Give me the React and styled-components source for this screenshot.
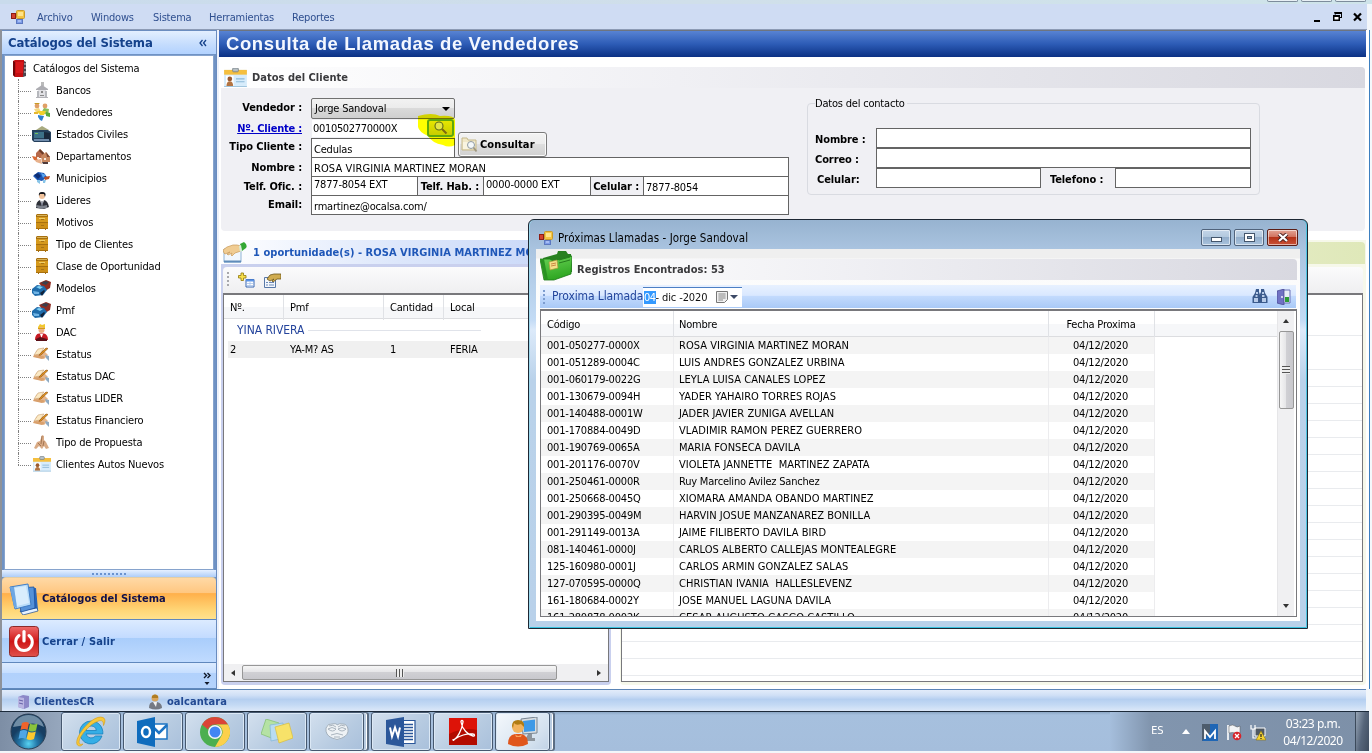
import React from 'react';
import styled, { createGlobalStyle, css } from 'styled-components';

const ui = '"DejaVu Sans Condensed", "DejaVu Sans", "Noto Sans", sans-serif';

const Global = createGlobalStyle`
  * { box-sizing: border-box; }
  body { margin: 0; overflow: hidden; font: 11px/13px ${ui}; color: #000; letter-spacing: -0.2px; }
  svg { display: block; flex: none; }
`;

/* ---------- frame ---------- */
const Screen = styled.div`
  position: relative; width: 1372px; height: 753px; overflow: hidden;
  display: grid; grid-template-rows: 4px 26px 659px 22px 40px 2px;
  background: #f2f6fa;
`;
const FrameTop = styled.div`
  display: flex; justify-content: flex-end; gap: 3px; padding-right: 6px;
  background: linear-gradient(90deg, #c9dbec, #d0dfea 50%, #cfe4ea);
`;
const CaptionStub = styled.i`
  width: 31px; height: 2px; border: 1px solid #7d8c9c; border-top: 0; border-radius: 0 0 4px 4px; background: #e8f0f5;
`;
const MenuBar = styled.nav`
  display: flex; align-items: center; padding: 1px 2px 0 10px; margin-right: 5px;
  background: #cfdcf3; border-bottom: 1px solid #8d9bb5; color: #2f4f8f;
`;
const MenuItem = styled.span`width: ${p => p.$w}px; padding-left: 1px; white-space: nowrap;`;
const Spacer = styled.div`flex: 1;`;
const Main = styled.main`
  display: flex; min-height: 0;
  background: linear-gradient(90deg, #fff 1369px, #3c7fc0 1369px, #3c7fc0 1370px, #f4f8fb 1370px);
`;

/* ---------- sidebar ---------- */
const Sidebar = styled.aside`
  width: 217px; flex: none; display: flex; flex-direction: column;
  border-left: 2px solid #8e9299; border-right: 1px solid #6a8cbf; background: #6f92c4;
`;
const SideHead = styled.header`
  height: 24px; padding: 0 9px 0 6px; display: flex; align-items: center; justify-content: space-between;
  background: linear-gradient(#e3efff, #c4dcfd 60%, #b2d2ff); border-top: 1px solid #6b8dc0;
  font: bold 13px/16px ${ui}; color: #15428b; letter-spacing: -0.1px;
`;
const Tree = styled.div`
  height: 515px; margin: 1px 2px 0 2px; padding: 1px 0 0 7px; background: #fff;
  border: 1px solid #86a3cd;
`;
const Root = styled.div`display: flex; align-items: center; height: 22px; gap: 7px;`;
const Branch = styled.div`
  position: relative; height: 22px; margin-left: 6px; display: flex; align-items: center; padding-left: 14px;
  white-space: nowrap; letter-spacing: -0.15px;
  &::before { content: ''; position: absolute; left: 0; top: 0; height: ${p => (p.$last ? '12px' : '22px')}; border-left: 1px dotted #808080; }
  &::after { content: ''; position: absolute; left: 0; top: 12px; width: 13px; border-top: 1px dotted #808080; }
`;
const BranchIcon = styled.span`width: 19px; height: 18px; margin-right: 5px; display: grid; place-items: center;`;
const Grip = styled.div`
  height: 7px; background: linear-gradient(#e6f0ff, #aecdf8); display: grid; place-items: center;
`;
const Dots = styled.i`
  flex: none; width: ${p => (p.$v ? '2px' : '35px')}; height: ${p => (p.$v ? p.$v + 'px' : '2px')};
  background: repeating-linear-gradient(${p => (p.$v ? '180deg' : '90deg')}, ${p => p.$c || '#6b93cf'} 0 2px, transparent 2px 4px);
`;
const NavButton = styled.div`
  height: 43px; display: flex; align-items: center; gap: 3px; padding-left: 7px;
  border-bottom: 1px solid #6088bd; font-weight: bold; color: #15428b; letter-spacing: 0.12px;
  background: linear-gradient(#dcebff, #c3dbff 42%, #a9cdfb 43%, #c0dbff);
  ${p => p.$hot && css`
    border-top: 1px solid #e3cda4; border-radius: 4px 4px 0 0; color: #10104a; letter-spacing: -0.03px;
    background: linear-gradient(#ffd9a6, #ffc781 36%, #ffb04b 38%, #ffd778 80%, #ffe28e);
  `}
`;
const NavFoot = styled.div`
  flex: 1; display: flex; flex-direction: column; align-items: flex-end; justify-content: flex-end; padding: 0 5px 2px;
  background: linear-gradient(#dcebff, #c6deff 40%, #b1d1fc 42%, #b5d3fc); border-bottom: 1px solid #6088bd;
`;

/* ---------- work area ---------- */
const Work = styled.section`flex: 1; min-width: 0; display: flex; flex-direction: column; padding: 0 6px 0 2px; background: linear-gradient(90deg, #eef2fb 2px, transparent 2px);`;
const PageTitle = styled.h1`
  margin: 0; height: 27px; padding-left: 7px; border-top: 1px solid #6d7480; color: #f4f8ff;
  background: linear-gradient(#5883d3, #2d5cb6 50%, #0b3184);
  font: bold 18.5px/25px "Liberation Sans", Arial, sans-serif; letter-spacing: 0.6px;
`;
const Panel = styled.div`
  height: 164px; margin: 10px 1px 0 2px; background: #f0f0f4; border-radius: 4px;
`;
const Strip = styled.header`
  height: 21px; display: flex; align-items: center; padding-left: ${p => p.$pad || 0}px; border-radius: 0 4px 0 0;
  background: linear-gradient(90deg, #fff, #f0f0f4 40%, #d8d8e0);
  font: bold 11px/14px ${ui}; color: #3a3a3d; letter-spacing: 0.02px;
`;
const PanelIcon = styled.span`width: 28px;`;
const PanelBody = styled.div`display: flex; justify-content: space-between; padding: 10px 105px 0 0;`;
const Form = styled.div`width: 568px; padding-left: 1px;`;
const FormTop = styled.div`display: flex; align-items: flex-start;`;
const FormRow = styled.div`display: flex; height: ${p => p.$h || 19}px;`;
const Label = styled.label`
  width: ${p => p.$w || 80}px; margin-right: ${p => (p.$m === undefined ? 9 : p.$m)}px; margin-left: ${p => p.$ml || 0}px; padding-left: ${p => p.$pl || 0}px;
  flex: none; text-align: ${p => p.$align || 'right'};
  font-weight: bold; line-height: ${p => p.$lh || 20}px; letter-spacing: -0.1px; white-space: nowrap;
  ${p => p.$link && css`color: #0000c8; text-decoration: underline; letter-spacing: -0.22px;`}
`;
const Field = styled.div`
  width: ${p => p.$w}px; height: ${p => p.$h || 20}px; flex: none; padding: 0 2px; background: #fff;
  border: 1px solid ${p => (p.$plain ? 'transparent' : '#646464')}; line-height: ${p => p.$lh || 21}px; white-space: nowrap;
  ${p => p.$plain && css`padding: 0 1px; background-clip: padding-box; letter-spacing: -0.32px;`}
  ${p => p.$caps && css`letter-spacing: 0.1px;`}
`;
const Combo = styled(Field)`
  display: flex; align-items: center; justify-content: space-between; padding: 0 0 0 3px; border-color: #707070; border-radius: 2px;
  background: linear-gradient(#f2f2f2, #ebebeb 48%, #dadada 50%, #cfcfcf);
`;
const SearchCell = styled.div`position: relative; width: 28px; height: 18px; margin-left: -28px;`;
const Highlight = styled.svg`position: absolute; left: -11px; top: -5px; mix-blend-mode: multiply;`;
const SearchButton = styled.button`
  position: absolute; inset: 0 1px 0 0; padding: 0; display: grid; place-items: center;
  border: 2px solid #5fa80c; border-radius: 3px; background: linear-gradient(#e6e600, #c9cd00);
`;
const Button = styled.button`
  width: 89px; height: 25px; margin: 34px 0 0 3px; padding: 0 0 0 2px; display: flex; align-items: center; gap: 2px;
  border: 1px solid #7a7a7a; border-radius: 3px; box-shadow: inset 0 0 0 1px #fafafa;
  background: linear-gradient(#f3f3f3, #ececec 48%, #dedede 50%, #d0d0d0);
  font: bold 11px/13px ${ui}; letter-spacing: 0.1px;
`;
const Contact = styled.fieldset`
  width: 453px; height: 98px; margin: -1px 0 0; padding: 18px 7px 0 7px; border: 1px solid #d9dbe1; border-radius: 4px;
  legend { padding: 0 2px 0 0; margin-left: 0; }
`;

/* ---------- lower area ---------- */
const Lower = styled.div`flex: 1; min-height: 0; display: flex; gap: 9px; margin: 9px 0 4px 2px;`;
const Pane = styled.div`
  width: ${p => (p.$w ? p.$w + 'px' : 'auto')}; flex: ${p => (p.$w ? 'none' : 1)}; display: flex; flex-direction: column;
  padding: 0 ${p => (p.$blue ? '2px 3px' : '3px 3px')} ${p => (p.$blue ? 2 : 1)}px; border-radius: 0 0 4px 4px; background: ${p => (p.$blue ? '#c9d0ee' : '#f6f8ea')};
`;
const PaneHead = styled.header`
  height: 24px; margin: 0 -2px; display: flex; align-items: center; gap: 6px; padding: 1px 0 0 2px; white-space: nowrap;
  font: bold 11px/14px ${ui}; color: #1f57b8; border-radius: 0 4px 0 0; letter-spacing: 0.05px;
  background: ${p => (p.$green ? 'linear-gradient(90deg, #fff, #dfe8b9)' : 'linear-gradient(90deg, #fff, #dde7fb 45%, #c2d3f7)')};
  ${p => p.$green && css`margin-top: 2px; height: 22px;`}
`;
const Tools = styled.div`
  height: 26px; margin-top: 3px; display: flex; align-items: center; gap: 9px; padding: 0 6px 0 4px;
  background: linear-gradient(#fbfbfc, #efeff1); border-radius: 4px 4px 0 0;
`;
const ListBox = styled.div`
  flex: 1; min-height: 0; display: flex; flex-direction: column; background: #fff; border: 1px solid #78787c; border-top-width: 2px;
  ${p => p.$lined && css`
    background:
      linear-gradient(#fff 39px, transparent 39px 42px, #fff 42px 60px, transparent 60px),
      repeating-linear-gradient(#fff 0 6px, #e9ebee 6px 7px, #fff 7px 17px);
  `}
`;
const DialogList = styled(ListBox)`margin-top: 1px;`;
const HeadRow = styled.div`
  display: grid; grid-template-columns: ${p => p.$cols}; height: ${p => p.$h || 24}px; flex: none; border-bottom: 1px solid #dcdde0;
  background: linear-gradient(#fff 50%, #f6f7f9 51%); line-height: ${p => (p.$h ? 27 : 25)}px;
`;
const HeadCell = styled.span`
  padding-left: 6px; border-right: 1px solid #e0e2e6;
  ${p => p.$tight && css`padding-left: 5px;`}
  ${p => p.$center && css`padding: 0 1px 0 0; text-align: center;`}
`;
const Group = styled.div`
  height: 22px; padding: 0 0 0 13px; display: flex; align-items: center; gap: 4px; color: #24449c; font-size: 12px; letter-spacing: -0.05px; white-space: nowrap;
  &::after { content: ''; width: 173px; border-top: 1px solid #e0e3ea; }
`;
const OppRow = styled.div`
  display: grid; grid-template-columns: 60px 100px 60px 1fr; height: 17px; margin-left: 4px; background: #f0f0f0; line-height: 17px;
  span { padding-left: 2px; }
`;
const HScroll = styled.div`height: 17px; margin-top: auto; display: flex; align-items: center; background: #f0f0f2;`;
const Arrow = styled.i`
  width: ${p => p.$w || 18}px; display: grid; place-items: center;
  &::before { content: ''; border: 3px solid transparent; border-width: ${p => (p.$big ? '4px' : '3px')};
    ${p => p.$dir === 'left' && 'border-right: 4px solid #333; border-left: 0;'}
    ${p => p.$dir === 'right' && 'border-left: 4px solid #333; border-right: 0;'}
    ${p => p.$dir === 'up' && 'border-bottom: 4px solid #333; border-top: 0;'}
    ${p => p.$dir === 'down' && `border-top: 4px solid ${p.$c || '#333'}; border-bottom: 0;`}
  }
`;
const Thumb = styled.div`
  display: grid; place-items: center; border: 1px solid #979797; border-radius: 2px; flex: none;
  ${p => (p.$v
    ? css`width: 15px; height: 78px; background: linear-gradient(90deg, #f6f6f6, #e6e6e8 45%, #d0d0d4 50%, #c8c8cd);`
    : css`width: 315px; height: 15px; background: linear-gradient(#f6f6f6, #e6e6e8 45%, #d0d0d4 50%, #c8c8cd);`)}
  &::after { content: ''; width: 8px; height: 8px; background: repeating-linear-gradient(${p => (p.$v ? '180deg' : '90deg')}, #555 0 1px, #eee 1px 3px); }
`;

/* ---------- dialog ---------- */
const Dialog = styled.section`
  position: absolute; left: 528px; top: 219px; width: 780px; height: 410px; padding: 0 7px 7px; display: flex; flex-direction: column;
  border: 1px solid #1d2733; border-radius: 6px 6px 0 0; background: linear-gradient(#97b3d0, #aac4e0 30px, #c3dbf5 100px, #dceafa 110px, #bad2ea 160px, #b9d1ea);
  box-shadow: inset 1px 0 #9cd8ee, inset -1px 0 #4fc5e2, inset 0 -1px #38c2df;
`;
const DialogTitle = styled.header`height: 29px; display: flex; align-items: center; gap: 3px; padding: 7px 2px 0 3px; font-size: 11.5px; letter-spacing: 0.08px;`;
const DialogName = styled.span`padding-left: 2px;`;
const Caption = styled.button`
  width: ${p => (p.$close ? 31 : 30)}px; height: 17px; padding: 0; display: grid; place-items: center; margin-top: -1px;
  border: 1px solid #50637c; border-radius: 2px; box-shadow: inset 0 0 0 1px #ffffff90;
  background: linear-gradient(#c3d5e8, #b2c8de 48%, #93aecb 50%, #a9c3dd);
  ${p => p.$close && css`border-color: #5b1d16; background: linear-gradient(#e3a595, #d0705c 48%, #b53318 50%, #c95238);`}
`;
const DialogBody = styled.div`flex: 1; min-height: 0; display: flex; flex-direction: column; padding: 10px 3px 4px 4px; background: linear-gradient(#efefef 9px, #fafafa 10px, #fff 80px);`;
const FolderMark = styled.span`width: 37px; height: 22px; display: flex; align-items: center; margin-top: -8px;`;
const FilterBar = styled.div`
  height: 23px; margin: 5px 1px 0 0; display: flex; align-items: center; padding-left: 3px; color: #24469c;
  background: linear-gradient(#e8f1ff, #d9e8ff 45%, #c2dafd 50%, #a9c9f7); font-size: 12px; letter-spacing: -0.11px; white-space: nowrap;
`;
const FilterLabel = styled.span`width: 98px; padding-left: 7px;`;
const FilterIcons = styled.span`display: flex; gap: 9px; padding-right: 5px;`;
const DatePick = styled.div`
  height: 20px; width: 99px; display: flex; align-items: center; color: #111; background: #fff; border-top: 1px solid #4d7fc4; padding: 0 2px 0 1px; font-size: 11px; letter-spacing: -0.12px;
  b { font-weight: normal; color: #fff; background: #3399ff; line-height: 13px; letter-spacing: -0.5px; }
`;
const ListSplit = styled.div`flex: 1; min-height: 0; display: flex;`;
const Rows = styled.div`flex: 1; min-width: 0; overflow: hidden;`;
const Row = styled.div`
  display: grid; grid-template-columns: 133px 375px 106px 1fr; height: 17px; line-height: 17px; white-space: pre;
  > span { padding-left: 6px; border-right: 1px solid #ececee; border-bottom: 1px solid #f1f1f3; background: ${p => (p.$alt ? '#f4f4f4' : '#fff')}; }
  > span:nth-child(2) { padding-left: 5px; letter-spacing: ${p => (p.$caps ? '0.02px' : '-0.2px')}; }
  > span:nth-child(3) { padding: 0 2px 0 0; text-align: center; }
  > span:last-child { background: #fff; border-right: 0; border-bottom-color: #e6e6e8; }
`;
const VScroll = styled.div`
  width: 17px; display: flex; flex-direction: column; align-items: center; background: #f0f0f2; margin-right: 2px; border-left: 1px solid #e6e6e8;
  > i { height: 20px; }
`;

/* ---------- status and taskbar ---------- */
const Status = styled.footer`
  display: flex; align-items: center; margin-right: 6px; padding: 2px 0 0 16px; border-top: 1px solid #5b84b5; border-left: 2px solid #8e9299;
  background: linear-gradient(#e2ecfa, #d0e0f6 25%, #b5cff0 45%, #c3d9f4 70%, #dce8f8);
  font: bold 11px/14px ${ui}; color: #234a93; letter-spacing: 0.05px;
`;
const StatusItem = styled.span`display: flex; align-items: center; gap: 5px; width: 131px;`;
const Taskbar = styled.footer`
  display: flex; align-items: stretch; margin-right: 3px; background: linear-gradient(#8ba6c4, #a6c0de 3px, #a5bedc); border-top: 1px solid #1c2a3a;
`;
const Start = styled.div`width: 61px; padding-right: 4px; background: linear-gradient(90deg, #7d8ea5, #96a7bd); display: grid; place-items: center;`;
const Task = styled.div`
  width: ${p => (p.$stack ? 55 : 60)}px; margin-right: ${p => (p.$stack ? 7 : 2)}px; display: grid; place-items: center;
  border: 1px solid #46586f; border-radius: 3px; box-shadow: inset 0 0 0 1px #dbe8f5;
  background: linear-gradient(135deg, #d3e0ee, #b7cbe1 60%, #a9c0db);
  ${p => p.$stack && css`box-shadow: inset 0 0 0 1px #dbe8f5, 3px 0 0 -1px #b9cce1, 4px 0 0 -1px #fff, 5px 0 0 0 #5b6d83;`}
  ${p => p.$active && css`background: linear-gradient(135deg, #f4f8fc, #d5e2ef 70%, #c0d2e6);`}
`;
const Tray = styled.div`
  width: 259px; margin-left: auto; display: flex; align-items: center; padding-left: 41px; color: #fff;
  background: linear-gradient(90deg, #a5bedc, #8195ae 40px, #7d90a8);
  font: 11.5px/17px "Noto Sans", sans-serif; letter-spacing: -0.1px;
`;
const Lang = styled.span`width: 31px; padding-bottom: 5px; font-size: 11.5px;`;
const TrayIcons = styled.span`display: flex; gap: 8px; align-items: center; margin-left: 12px; padding-top: 2px;`;
const Clock = styled.span`width: 62px; margin-left: 16px; text-align: center; white-space: nowrap; font-size: 12px; letter-spacing: -0.45px;`;
const ShowDesktop = styled.div`align-self: stretch; width: 14px; margin-left: auto; border-left: 1px solid #3c4a5b; background: linear-gradient(100deg, #97a5b6, #56657a 50%, #3f4c5e);`;

/* ---------- drawings ---------- */
const Svg = ({ w = 16, h = 16, vb, children, ...r }) => <svg width={w} height={h} viewBox={vb || `0 0 ${w} ${h}`} {...r}>{children}</svg>;

const FormsIcon = () => (
  <Svg w={14} h={14}>
    <rect x="5.5" y=".5" width="8" height="8" rx="1" fill="#f4c542" stroke="#c99a2a" />
    <rect x="7" y="2" width="5" height="4" fill="#ffe48a" />
    <rect x=".5" y="3.5" width="4" height="5" fill="#d2402f" stroke="#8e1b12" />
    <rect x="5.5" y="9.5" width="6" height="4" fill="#7d9de8" stroke="#5c78c0" />
    <rect x="7" y="10.5" width="3" height="1" fill="#cfdcff" />
  </Svg>
);
const Book = () => (
  <Svg w={14} h={17}><path d="M1 1l2-1h9v15l-1 2H3l-2-2z" fill="#c40f12" /><path d="M1 1l2 1v15l-2-2z" fill="#700609" /><path d="M12 1l2 1v14l-3 1z" fill="#4b4650" /><path d="M12 4h2M12 8h2M12 12h2" stroke="#ddd" /><path d="M4 2h7v11H4z" fill="#d8181b" /></Svg>
);
const Bank = () => (
  <Svg><path d="M7 0h3v4H7z" fill="#bbb" /><path d="M2 7l6-4 6 4v1H2z" fill="#adadb2" /><path d="M4 8h8v7H4z" fill="#e0e0e4" /><path d="M3 9h2v6H3zM11 9h2v6h-2z" fill="#b6b8bd" /><path d="M7 9h2v2H7zM6 13h4v1H6z" fill="#888" /><path d="M2 15h12v1H2z" fill="#b3b3b8" /></Svg>
);
const Sellers = () => (
  <Svg w={17} h={18}><circle cx="4" cy="3" r="2.4" fill="#e0a066" /><circle cx="12" cy="3" r="2.4" fill="#e0a066" /><path d="M1 1q3-3 6 0" fill="#c69a20" /><path d="M1 6l5-1 2 4-4 2z" fill="#f3d984" /><path d="M16 6l-5-1-3 5 7 2z" fill="#8cbf5a" /><path d="M4 8h9l-2 4H7z" fill="#f2d02c" /><path d="M1 9h4v2H1z" fill="#e6b830" /><path d="M5 12l6 1-2 5-2-1-2-3z" fill="#2f80cf" /><path d="M13 9l4 1v4l-4-1z" fill="#5aa83c" /></Svg>
);
const Civil = () => (
  <Svg w={19} h={17}><path d="M4 4l6-4 7 4z" fill="#a8aa80" /><path d="M0 4h16l3 2v10H2L0 14z" fill="#25405c" /><path d="M2 6h10v6H2z" fill="#3c7088" /><path d="M3 7h3v1H3z" fill="#76c05c" /><path d="M12 6l6 1v7h-6z" fill="#19283c" /><path d="M2 13h15v2H2z" fill="#6f8bab" /></Svg>
);
const Village = () => (
  <Svg w={19} h={16}><path d="M4 5l4-4 4 4v5H4z" fill="#b5694a" /><path d="M8 1l4 4-1 2-4-4z" fill="#6b3b27" /><path d="M9 8l5-4 4 5v5h-8z" fill="#c88860" /><path d="M14 4l4 5h-3z" fill="#7d4630" /><path d="M0 8l5 1 1 4-4-1z" fill="#d86a35" /><path d="M3 12l6-1 1 5-6-2z" fill="#e7b18c" /><path d="M5 9h2v2H5zM12 10h2v2h-2z" fill="#f8e8da" /><path d="M10 14l6 0 0 2h-5z" fill="#4e3a3a" /></Svg>
);
const Town = () => (
  <Svg w={17} h={14}><path d="M0 5l5-4 6 1 3 4-5 4-5-1z" fill="#1c57b5" /><path d="M1 4l4-2 3 3-3 3z" fill="#0f2e74" /><path d="M8 2l5 2-3 3z" fill="#5ba5ef" /><path d="M11 6l6-1-1 3-4 1z" fill="#bb4f25" /><path d="M4 9l3 0 0 4-3-2zM10 9h3l-1 3h-2z" fill="#89c5e8" /></Svg>
);
const Leader = () => (
  <Svg w={14} h={17}><circle cx="7" cy="4" r="3" fill="#f0c29c" /><path d="M4 4q-1-4 3-4 5 0 3 5L9 2 5 2z" fill="#15151a" /><path d="M1 16q0-7 4-8h4q4 1 5 7l-5 2z" fill="#2e3038" /><path d="M5 8h4l-2 6z" fill="#fff" /><path d="M6.500 9h1l.5 4-1 1-1-1z" fill="#707484" /><path d="M1 13l6 1 5-1v3l-6 1-5-2z" fill="#7d828c" /></Svg>
);
const Cabinet = () => (
  <Svg w={12} h={16}><path d="M0 1l1-1h10l1 1v14h-2v1h-1v-1H3v1H2v-1H0z" fill="#a8700f" /><path d="M0 3h12v5H0z" fill="#d69a1e" /><path d="M0 9h12v5H0z" fill="#cd8f18" /><path d="M3 4h6v1H3z" fill="#f1cf6a" /><path d="M5 5h3v1H5zM5 11h3v1H5z" fill="#a87414" /><path d="M1 1h10v1H1z" fill="#d8b45a" /></Svg>
);
const Cars = () => (
  <Svg w={19} h={16}><path d="M7 3l7-3 5 2-1 6-5 3z" fill="#8f2d22" /><path d="M9 3l4-2 4 1-3 3z" fill="#3a3f4c" /><path d="M0 9l5-4 7 1 3 4-4 5-8 1-3-3z" fill="#1f6cab" /><path d="M4 7l3-1 4 1-3 2z" fill="#7fd0f5" /><path d="M1 11l6 1 0 2-5 0z" fill="#6fb4e6" /><path d="M8 13l4-3 1 1-3 5z" fill="#11233c" /></Svg>
);
const Dac = () => (
  <Svg w={13} h={17}><path d="M3 3l2-3 2 1 3-1v4H3z" fill="#f1c72e" /><circle cx="6.500" cy="6" r="3" fill="#ecb184" /><path d="M3 4h7v1H3z" fill="#d49b15" /><path d="M0 16q0-6 4-6.500h5q4 1 4 6.500z" fill="#c81b24" /><path d="M5 10l1.500 4L8 10z" fill="#fff" /><path d="M1 15l4-2 7 2v2H1z" fill="#5a1018" /></Svg>
);
const Writing = () => (
  <Svg w={17} h={14}><path d="M3 4l5-2 4 3 3 3-4 4-9-2z" fill="#e5b68c" /><path d="M5 2l6-1-4 6-6 1z" fill="#fbe9c4" stroke="#c8a070" strokeWidth=".6" /><path d="M6 8l7-7 2 .5-7 6.500-2 1z" fill="#e0921a" stroke="#8e5010" strokeWidth=".6" /><path d="M1 8l9 1 2 1-3 2-9-2z" fill="#d9a06c" /><path d="M12 8l4 1v5l-3-3z" fill="#8fabc4" /></Svg>
);
const Pray = () => (
  <Svg w={15} h={15}><path d="M0 13l3-6 3-1 2-6 2 1 0 4 2 2 3 6-3 1-2-3-2 3-3-3-3 3z" fill="#d9ab86" /><path d="M8 1l-1 8M4 8l3 3M10 6l-1 5" stroke="#a37654" fill="none" /></Svg>
);
const Badge = ({ w = 18, h = 16 }) => (
  <Svg w={w} h={h} vb="0 0 24 20"><path d="M0 2h24v18H0z" fill="#d7ecfb" /><path d="M0 2h24v5H0z" fill="#f5bf3f" /><rect x="9" y="0" width="6" height="4" rx="1" fill="#b7c0c6" stroke="#70787e" strokeWidth=".8" /><path d="M2 8h8v11H2z" fill="#fff" /><circle cx="6" cy="11.500" r="2.500" fill="#9a5b2f" /><path d="M2.500 19q0-5 3.500-5t3.500 5z" fill="#b37442" /><path d="M12.500 11.500h9M12.500 14.500h9" stroke="#8db9d8" strokeWidth="1.200" /><path d="M0 19.500h24" stroke="#9ec3dc" /></Svg>
);
const Catalog = () => (
  <Svg w={30} h={32}><path d="M12 6l15-1 2 22-16 4z" fill="#2a67bb" /><path d="M11 28l17-3 1 3-15 4z" fill="#e6f2ff" stroke="#1b4a90" strokeWidth=".7" /><path d="M8 5l17-1 1 21-14 4z" fill="#5591d8" stroke="#1c4f9c" strokeWidth=".8" /><path d="M1 4l18-3 3 21-16 4z" fill="#b8dcf9" stroke="#3f7dc6" strokeWidth="1" /><path d="M5 5l12-2 3 17-12 3z" fill="#d8edfd" /><path d="M1 4l4 0 3 21-3-1z" fill="#6ca6e2" /></Svg>
);
const Power = () => (
  <Svg w={30} h={31}><defs><linearGradient id="pw" x2="0" y2="1"><stop stopColor="#ee6a6a" /><stop offset=".5" stopColor="#cf1717" /><stop offset="1" stopColor="#e0524c" /></linearGradient></defs><rect x=".5" y=".5" width="29" height="30" rx="3" fill="url(#pw)" stroke="#8c2a2a" /><path d="M10 9.500a8.300 8.300 0 1 0 10 0" fill="none" stroke="#fff" strokeWidth="3" strokeLinecap="round" /><path d="M15 5.500v9.500" stroke="#fff" strokeWidth="3.200" strokeLinecap="round" /></Svg>
);
const HandCard = () => (
  <Svg w={24} h={21}><path d="M1 7h17v13H1z" fill="#f1f7fd" stroke="#8fb2d4" /><path d="M1 19.500h17" stroke="#5f8cba" strokeWidth="2" /><path d="M0 8l4-3 6-2 4 0 4 1 0 5-6 2-3 3-1-1 1-2-4 2-1-1 3-2-5 2-1-1z" fill="#f0cc92" stroke="#c99a58" strokeWidth=".7" /><path d="M17 2l4-2q4 3 2 6l-4 3z" fill="#33a834" /><path d="M16 4l2-1 1 6-2 1z" fill="#d9f0d9" /></Svg>
);
const AddGrid = () => (
  <Svg w={17} h={16}><path d="M3 1h2.500v2.500H8V6H5.500v2.500H3V6H.500V3.500H3z" fill="#f8df4a" stroke="#9b8418" strokeWidth=".9" /><path d="M8 7.500h8v7.500H8z" fill="#fff" stroke="#3767b3" /><path d="M8 7.500h8v2H8z" fill="#5b93e5" /><path d="M9 11.500h6M9 13.500h6M12 10v5" stroke="#a8c3e8" strokeWidth=".8" /></Svg>
);
const PropGrid = () => (
  <Svg w={17} h={15}><path d="M.5 4.500h11v10H.500z" fill="#f3f7fc" stroke="#5878a8" /><path d="M2 9.500h2M5 9.500h5M2 12h2M5 12h5" stroke="#6d8ab8" /><path d="M3 6l3-4 4-1 7 0v5l-4 0-4 3-1-1 2-2-4 2z" fill="#d0ac50" stroke="#6d5618" strokeWidth=".8" /></Svg>
);
const Magnifier = () => (
  <Svg w={16} h={14}><circle cx="6" cy="5" r="4" fill="#e3e645" stroke="#5d6a1c" strokeWidth="1.100" /><path d="M9 8l4.500 4.500" stroke="#7a6a10" strokeWidth="2" /></Svg>
);
const FolderSearch = () => (
  <Svg w={17} h={17}><path d="M1 2h5l1 2h8v10H1z" fill="#f1e8c8" stroke="#c5b88a" /><path d="M2 6h12v7H2z" fill="#f9f4e0" /><circle cx="10" cy="9" r="3.500" fill="#f4f8fa" stroke="#909aa0" /><path d="M12.500 11.500l3 4" stroke="#a09880" strokeWidth="1.800" /></Svg>
);
const Folder = () => (
  <Svg w={32} h={30}><defs><linearGradient id="fd" x2=".3" y2="1"><stop stopColor="#6bd457" /><stop offset="1" stopColor="#2fa722" /></linearGradient></defs><path d="M3 7l14-4 1-3 8 0 2 3 3 0 1 18H6z" fill="#27801f" /><path d="M0 8l10 0 3 2 19-5-1 18-17 6-10 0z" fill="url(#fd)" stroke="#1d7a18" strokeWidth=".8" /><path d="M0 8l4 0 4 21-3 0z" fill="#2a9222" /><path d="M9 11l8-2 1 8-8 2z" fill="#f3e08a" stroke="#a89a38" strokeWidth=".7" /><path d="M11 13l5-1M11 15l5-1" stroke="#c07030" strokeWidth=".8" /><path d="M19 9l11-3M19 12l11-3" stroke="#257d1c" /></Svg>
);
const Cal = () => (
  <Svg w={12} h={12}><path d="M.5.500h11v8l-3 3h-8z" fill="#efefef" stroke="#777" /><path d="M2 3h8M2 5h8M2 7h8M2 9h5M4 2v8M6 2v8M8 2v6" stroke="#9a9a9a" strokeWidth=".7" /></Svg>
);
const Binoculars = () => (
  <Svg w={16} h={14}><path d="M4 0h3v3l1 3v8H.500V8L3 4zM9 0h3l1 4 2.500 4v6H8V5l1-2z" fill="#3b5a8c" /><path d="M2 9h4v4H2zM10 9h4v4h-4zM4 3h2v2H4zM10 3h2v2h-2zM3.500 6h2v2h-2zM10 6h2.500v2H10z" fill="#b8cbe8" /></Svg>
);
const Door = () => (
  <Svg w={14} h={16}><path d="M5 1h8v13H5z" fill="#e8eef8" stroke="#6a70b8" /><path d="M8 8h4v5H8z" fill="#2e9b38" /><path d="M0 2l7-2v16l-7-2z" fill="#7172c4" stroke="#43448c" strokeWidth=".7" /><circle cx="5" cy="8" r=".9" fill="#fff" /></Svg>
);
const Db = () => (
  <Svg w={11} h={14}><path d="M0 2l5-2 6 1v11l-5 2-6-2z" fill="#8c88c8" /><path d="M0 2l6 1v11l-6-2z" fill="#b9b5e2" /><path d="M1 5l4 1M1 8l4 1" stroke="#6763a8" /></Svg>
);
const User = () => (
  <Svg w={13} h={16}><circle cx="6" cy="4" r="3.500" fill="#d9a55c" /><path d="M3 2q3-3 6 0v2H3z" fill="#b07d22" /><path d="M0 14q0-6 4-6h4q5 1 5 6-6 3-13 0z" fill="#757a84" /><path d="M4 8h4l-1 5z" fill="#f2f2f2" /></Svg>
);
const StartOrb = () => (
  <Svg w={37} h={37}><defs><radialGradient id="orb" cy=".85"><stop stopColor="#58d3f2" /><stop offset=".5" stopColor="#2377a8" /><stop offset="1" stopColor="#173e62" /></radialGradient></defs><circle cx="18.5" cy="18.500" r="17.500" fill="url(#orb)" stroke="#2b3f55" /><path d="M3 14q4-12 15.500-12t15.500 12q-8-5-15.500-3T3 14z" fill="#dcecf6" opacity=".45" /><path d="M12 10q4-2 7 0l-1.500 7q-3-2-7 0z" fill="#f0632a" /><path d="M20 10.500q3 2 7.500 0L26 17.500q-4 2-7.500 0z" fill="#8ac43c" /><path d="M10 18q4-2 7.300 0L15.500 26q-3-2-7 0z" fill="#4ea6e4" /><path d="M18.300 18.500q3 2 7.500 0L24 26q-4 2-7.500 0z" fill="#fdc92e" /></Svg>
);
const Ie = () => (
  <Svg w={32} h={32}><path d="M16 5a11.500 11.500 0 1 0 11 15h-6.500a5.500 5.500 0 0 1-9.500-2h16.800A11.700 11.700 0 0 0 16 5zm-5 9.500a5.200 5.200 0 0 1 10.300 0z" fill="#35aee6" stroke="#1580bd" strokeWidth=".8" /><path d="M5 30C0 30 1 23 6 16 12 7 22-1 28 1.500c3 1.500 2 5 .5 8 0-5-2-5.500-5-4.500C14 8 4 21 4 26c0 2 1 3 4 2-1 1-2 2-3 2z" fill="#f7c83a" stroke="#d59b10" strokeWidth=".6" /></Svg>
);
const Outlook = () => (
  <Svg w={32} h={30}><path d="M15 7h15v15H15z" fill="#fff" stroke="#1d74c4" strokeWidth="1.500" /><path d="M17 11l5 5L30 8" fill="none" stroke="#1d74c4" strokeWidth="2.500" /><path d="M0 4l18-4v30L0 26z" fill="#0f6cbd" /><ellipse cx="9" cy="15" rx="4" ry="5" fill="none" stroke="#fff" strokeWidth="2.500" /></Svg>
);
const Chrome = () => (
  <Svg w={30} h={30}><circle cx="15" cy="15" r="15" fill="#4caf50" /><path d="M15 0a15 15 0 0 1 13 7.500H15a7.500 7.500 0 0 0-7 5L2 7.500A15 15 0 0 1 15 0z" fill="#db4437" /><path d="M28 7.500A15 15 0 0 1 15 30l6.500-11.200A7.500 7.500 0 0 0 15 7.500z" fill="#fcd04b" /><circle cx="15" cy="15" r="7" fill="#f5f5f5" /><circle cx="15" cy="15" r="5.500" fill="#4285f4" /></Svg>
);
const Notes = () => (
  <Svg w={32} h={26}><path d="M5 0l13 4-5 16L0 15z" fill="#b5e2a4" stroke="#7fbd6c" strokeWidth=".7" /><path d="M9 6l13-2 2 15-14 3z" fill="#b8dcf2" stroke="#82b4d6" strokeWidth=".7" /><path d="M14 8l14-4 4 15-14 5z" fill="#f7e269" stroke="#d8bd3c" strokeWidth=".7" /></Svg>
);
const Mask = () => (
  <Svg w={24} h={17}><path d="M1 5q2-5 6-4 5-1 5 1 2-2 6-1 4 0 5 5 1 6-6 9-5 3-10 0Q0 12 1 5z" fill="#eef2f5" stroke="#a3b0bc" /><path d="M3 6q4-3 8 0-3 4-8 0zM13 6q4-3 8 0-4 4-8 0zM6 12q6-3 12 0M4 3q4-2 7 1M13 4q3-3 7-1M9 14h6" fill="none" stroke="#98a4b0" strokeWidth=".8" /></Svg>
);
const Word = () => (
  <Svg w={30} h={30}><path d="M15 3.500h14v23H15z" fill="#fff" stroke="#2b579a" strokeWidth="1.200" /><path d="M18 7.500h9M18 10.500h9M18 13.500h9M18 16.500h9M18 19.500h9M18 22.500h9" stroke="#2b579a" strokeWidth="1.300" /><path d="M0 3l18-3v30L0 27z" fill="#2b579a" /><path d="M4 10.500l2 9 3-9 3 9 2-9" fill="none" stroke="#fff" strokeWidth="2" /></Svg>
);
const Acrobat = () => (
  <Svg w={28} h={27}><path d="M0 0h28v27H0z" fill="#b30b00" /><path d="M0 0h28v12q-14-3-28 4z" fill="#dd1308" /><path d="M4 22c4-1 9-10 10-18 .5-2-2.500-2-2 0 1 7 7 13 12 14 2 .5 2-2 0-2-6-1-14 2-18 5-1.500 1-1.500 2-2 1z" fill="none" stroke="#fff" strokeWidth="1.300" /></Svg>
);
const Remote = () => (
  <Svg w={30} h={30}><path d="M13 2l16-2v16l-14 1z" fill="#d9dde0" stroke="#788490" /><path d="M15 4l12-1.500v11.500L16 15z" fill="#3f9ae6" /><path d="M20 17h4v4h3v3h-9v-3z" fill="#8c949c" /><circle cx="10" cy="10" r="6" fill="#f2b35e" /><path d="M4 9q0-6 6-6 7 0 6 7l-3-3q-5 2-7-1l-1 5z" fill="#b07c14" /><path d="M0 27q0-9 7-10h7q6 2 6 10-10 5-20 0z" fill="#e0561c" /><path d="M7 17q3 4 7 0l-1 3H8z" fill="#fba35c" /></Svg>
);
const TrayM = () => (<Svg w={16} h={17}><path d="M0 0h16v17H0z" fill="#1f66b5" /><path d="M0 0h8v8L0 17z" fill="#4d5c6d" /><path d="M3 15V7l5 6 5-6v8" fill="none" stroke="#fff" strokeWidth="1.800" /></Svg>);
const Flag = () => (<Svg w={16} h={17}><path d="M2 1v15" stroke="#fff" strokeWidth="1.600" /><path d="M3 2q4-2 6 0t5 0v7q-3 1-5 0t-6 0z" fill="#f2f4f6" stroke="#555" strokeWidth=".5" /><circle cx="11" cy="12" r="4.300" fill="#d8232a" /><path d="M9 10l4 4M13 10l-4 4" stroke="#fff" strokeWidth="1.300" /></Svg>);
const Net = () => (<Svg w={16} h={17}><path d="M5 4h10v8H5z" fill="#4e5964" stroke="#fff" /><path d="M1 1v4h4V1M3 5v9h4" fill="none" stroke="#fff" strokeWidth="1.200" /><path d="M11 7l5 9H6z" fill="#f5d332" stroke="#8a7410" strokeWidth=".6" /><path d="M11 10v3M11 14v1" stroke="#222" strokeWidth="1.200" /></Svg>);
const TrayUp = () => <Svg w={8} h={5}><path d="M4 0l4 5H0z" fill="#fff" /></Svg>;
const MinIcon = () => <Svg w={11} h={9}><rect x=".5" y="4.5" width="10" height="4" fill="#fff" stroke="#44566c" /></Svg>;
const MaxIcon = () => <Svg w={11} h={9}><rect x=".5" y=".5" width="10" height="8" fill="#fff" stroke="#44566c" /><rect x="3.500" y="3.500" width="4" height="2" fill="#8fa8c0" stroke="#44566c" /></Svg>;
const CloseIcon = () => <Svg w={12} h={9}><path d="M2 1l8 7M10 1L2 8" stroke="#4a2020" strokeWidth="4" /><path d="M2 1l8 7M10 1L2 8" stroke="#fff" strokeWidth="2.300" /></Svg>;
const MdiControls = () => (
  <Svg w={52} h={14}><path d="M1 10h6v2H1z" /><path d="M21 2h8v6h-2v3h-7V5h2zM22.500 4v1H27v2h1V4z" fillRule="evenodd" /><path d="M21.500 7h4v2.500h-4z" fill="#fff" /><path d="M41 3.500l7 7M48 3.500l-7 7" stroke="#000" strokeWidth="2.200" /></Svg>
);
const MoreIcon = () => (
  <Svg w={8} h={14}><path d="M1 1l2.500 2.500L1 6M4.500 1L7 3.500 4.500 6" fill="none" stroke="#101828" strokeWidth="1.400" /><path d="M1.500 10h5L4 13z" fill="#101828" /></Svg>
);
const CollapseIcon = () => (
  <Svg w={8} h={8}><path d="M3.500 1L1 4l2.500 3M7 1L4.500 4 7 7" fill="none" stroke="#15428b" strokeWidth="1.300" /></Svg>
);

/* ---------- data ---------- */
const menus = [['Archivo', 54], ['Windows', 62], ['Sistema', 56], ['Herramientas', 83], ['Reportes', 60]];
const nodes = [
  ['Bancos', Bank], ['Vendedores', Sellers], ['Estados Civiles', Civil], ['Departamentos', Village], ['Municipios', Town],
  ['Lideres', Leader], ['Motivos', Cabinet], ['Tipo de Clientes', Cabinet], ['Clase de Oportunidad', Cabinet], ['Modelos', Cars],
  ['Pmf', Cars], ['DAC', Dac], ['Estatus', Writing], ['Estatus DAC', Writing], ['Estatus LIDER', Writing],
  ['Estatus Financiero', Writing], ['Tipo de Propuesta', Pray], ['Clientes Autos Nuevos', Badge],
];
const callColumns = '133px 375px 106px 1fr';
const calls = [
  ['001-050277-0000X', 'ROSA VIRGINIA MARTINEZ MORAN'], ['001-051289-0004C', 'LUIS ANDRES GONZALEZ URBINA'],
  ['001-060179-0022G', 'LEYLA LUISA CANALES LOPEZ'], ['001-130679-0094H', 'YADER YAHAIRO TORRES ROJAS'],
  ['001-140488-0001W', 'JADER JAVIER ZUNIGA AVELLAN'], ['001-170884-0049D', 'VLADIMIR RAMON PEREZ GUERRERO'],
  ['001-190769-0065A', 'MARIA FONSECA DAVILA'], ['001-201176-0070V', 'VIOLETA JANNETTE  MARTINEZ ZAPATA'],
  ['001-250461-0000R', 'Ruy Marcelino Avilez Sanchez'], ['001-250668-0045Q', 'XIOMARA AMANDA OBANDO MARTINEZ'],
  ['001-290395-0049M', 'HARVIN JOSUE MANZANAREZ BONILLA'], ['001-291149-0013A', 'JAIME FILIBERTO DAVILA BIRD'],
  ['081-140461-0000J', 'CARLOS ALBERTO CALLEJAS MONTEALEGRE'], ['125-160980-0001J', 'CARLOS ARMIN GONZALEZ SALAS'],
  ['127-070595-0000Q', 'CHRISTIAN IVANIA  HALLESLEVENZ'], ['161-180684-0002Y', 'JOSE MANUEL LAGUNA DAVILA'],
  ['161-280878-0002K', 'CESAR AUGUSTO GASGO CASTILLO'],
];

function SidePanel() {
  return (
    <Sidebar>
      <SideHead><span>Catálogos del Sistema</span><CollapseIcon /></SideHead>
      <Tree>
        <Root><Book /><span>Catálogos del Sistema</span></Root>
        {nodes.map(([name, Icon], i) => (
          <Branch key={name} $last={i === nodes.length - 1}><BranchIcon><Icon /></BranchIcon>{name}</Branch>
        ))}
      </Tree>
      <Grip><Dots /></Grip>
      <NavButton $hot><Catalog />Catálogos del Sistema</NavButton>
      <NavButton><Power />Cerrar / Salir</NavButton>
      <NavFoot><MoreIcon /></NavFoot>
    </Sidebar>
  );
}

function ClientForm() {
  return (
    <Form>
      <FormTop>
        <div>
          <FormRow $h={21}><Label>Vendedor :</Label><Combo $w={144} $h={21}>Jorge Sandoval<Arrow $w={16} $big $dir="down" $c="#000" /></Combo></FormRow>
          <FormRow><Label $link>Nº. Cliente :</Label><Field $w={144} $h={19} $plain $lh={18}>0010502770000X</Field>
            <SearchCell>
              <Highlight width="40" height="33"><path d="M2 2q14-4 22 0 14-1 15 4v25q-6 3-12 0-11-2-15-9-9-4-10-9z" fill="#ffff00" /></Highlight>
              <SearchButton><Magnifier /></SearchButton>
            </SearchCell>
          </FormRow>
          <FormRow><Label $lh={17}>Tipo Cliente :</Label><Field $w={144} $h={20}>Cedulas</Field></FormRow>
        </div>
        <Button><FolderSearch />Consultar</Button>
      </FormTop>
      <FormRow><Label $lh={22}>Nombre :</Label><Field $w={478} $caps>ROSA VIRGINIA MARTINEZ MORAN</Field></FormRow>
      <FormRow>
        <Label $lh={22}>Telf. Ofic. :</Label><Field $w={107} $lh={16}>7877-8054 EXT</Field>
        <Label $w={61} $m={4} $lh={22}>Telf. Hab. :</Label><Field $w={108} $lh={16}>0000-0000 EXT</Field>
        <Label $w={48} $m={4} $lh={22}>Celular :</Label><Field $w={146}>7877-8054</Field>
      </FormRow>
      <FormRow $h={20}><Label>Email:</Label><Field $w={478}>rmartinez@ocalsa.com/</Field></FormRow>
    </Form>
  );
}

function ContactForm() {
  return (
    <Contact>
      <legend>Datos del contacto</legend>
      <FormRow $h={20}><Label $align="left" $w={61} $m={0} $lh={23}>Nombre :</Label><Field $w={375} /></FormRow>
      <FormRow $h={20}><Label $align="left" $w={61} $m={0} $lh={23}>Correo :</Label><Field $w={375} /></FormRow>
      <FormRow $h={20}><Label $align="left" $w={61} $m={0} $pl={2} $lh={23}>Celular:</Label><Field $w={165} />
        <Label $align="left" $w={65} $ml={9} $m={0} $lh={23}>Telefono :</Label><Field $w={136} />
      </FormRow>
    </Contact>
  );
}

function CallsDialog() {
  return (
    <Dialog>
      <DialogTitle><FormsIcon /><DialogName>Próximas Llamadas - Jorge Sandoval</DialogName><Spacer />
        <Caption><MinIcon /></Caption><Caption><MaxIcon /></Caption><Caption $close><CloseIcon /></Caption>
      </DialogTitle>
      <DialogBody>
        <Strip><FolderMark><Folder /></FolderMark>Registros Encontrados: 53</Strip>
        <FilterBar>
          <Dots $v={14} $c="#7d9dd0" />
          <FilterLabel>Proxima Llamada</FilterLabel>
          <DatePick><b>04</b>- dic -2020<Spacer /><Cal /><Arrow $w={12} $big $dir="down" $c="#3c4a66" /></DatePick>
          <Spacer /><FilterIcons><Binoculars /><Door /></FilterIcons>
        </FilterBar>
        <DialogList>
          <ListSplit>
            <Rows>
              <HeadRow $h={26} $cols={callColumns}><HeadCell>Código</HeadCell><HeadCell $tight>Nombre</HeadCell><HeadCell $center>Fecha Proxima</HeadCell><span /></HeadRow>
              {calls.map(([id, name], i) => (
                <Row key={id} $alt={i % 2 === 0} $caps={name === name.toUpperCase()}><span>{id}</span><span>{name}</span><span>04/12/2020</span><span /></Row>
              ))}
            </Rows>
            <VScroll><Arrow $dir="up" /><Thumb $v /><Spacer /><Arrow $dir="down" /></VScroll>
          </ListSplit>
        </DialogList>
      </DialogBody>
    </Dialog>
  );
}

export default function App() {
  return (
    <>
      <Global />
      <Screen>
        <FrameTop><CaptionStub /><CaptionStub /><CaptionStub /></FrameTop>
        <MenuBar>
          <MenuItem $w={26}><FormsIcon /></MenuItem>
          {menus.map(([m, w]) => <MenuItem key={m} $w={w}>{m}</MenuItem>)}
          <Spacer /><MdiControls />
        </MenuBar>
        <Main>
          <SidePanel />
          <Work>
            <PageTitle>Consulta de Llamadas de Vendedores</PageTitle>
            <Panel>
              <Strip $pad={3}><PanelIcon><Badge w={23} h={19} /></PanelIcon>Datos del Cliente</Strip>
              <PanelBody><ClientForm /><ContactForm /></PanelBody>
            </Panel>
            <Lower>
              <Pane $w={390} $blue>
                <PaneHead><HandCard />1 oportunidade(s) - ROSA VIRGINIA MARTINEZ MORAN</PaneHead>
                <Tools><Dots $v={16} $c="#a8a8ac" /><AddGrid /><PropGrid /></Tools>
                <ListBox>
                  <HeadRow $cols="60px 100px 60px 1fr"><HeadCell>Nº.</HeadCell><HeadCell>Pmf</HeadCell><HeadCell>Cantidad</HeadCell><HeadCell>Local</HeadCell></HeadRow>
                  <Group>YINA RIVERA</Group>
                  <OppRow><span>2</span><span>YA-M? AS</span><span>1</span><span>FERIA</span></OppRow>
                  <HScroll><Arrow $dir="left" /><Thumb /><Spacer /><Arrow $dir="right" /></HScroll>
                </ListBox>
              </Pane>
              <Pane>
                <PaneHead $green />
                <Tools />
                <ListBox $lined />
              </Pane>
            </Lower>
          </Work>
        </Main>
        <Status><StatusItem><Db />ClientesCR</StatusItem><StatusItem><User />oalcantara</StatusItem></Status>
        <Taskbar>
          <Start><StartOrb /></Start>
          <Task><Ie /></Task><Task><Outlook /></Task><Task><Chrome /></Task><Task><Notes /></Task>
          <Task $stack><Mask /></Task><Task><Word /></Task><Task><Acrobat /></Task><Task $stack $active><Remote /></Task>
          <Tray>
            <Lang>ES</Lang><TrayUp />
            <TrayIcons><TrayM /><Flag /><Net /></TrayIcons>
            <Clock>03:23 p.m.<br />04/12/2020</Clock>
            <ShowDesktop />
          </Tray>
        </Taskbar>
        <CallsDialog />
      </Screen>
    </>
  );
}
